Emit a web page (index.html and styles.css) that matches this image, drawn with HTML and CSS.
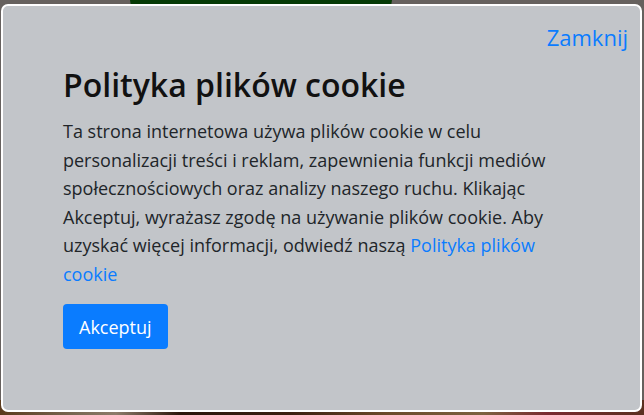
FILE: index.html
```html
<!DOCTYPE html>
<html lang="pl">
<head>
    <meta charset="UTF-8">
    <meta name="viewport" content="width=device-width, initial-scale=1.0">
    <title>Polityka plików cookie</title>
    <link rel="stylesheet" href="styles.css">
</head>
<body>
    <!-- Tło strony pod oknem -->
    <div class="page-bg">
        <div class="bg-logo"></div>
    </div>

    <!-- Okno cookie -->
    <div class="cookie-modal">
        <div class="modal-top">
            <a href="javascript:void(0)" class="close-link">Zamknij</a>
        </div>
        <div class="modal-body">
            <h2>Polityka plików cookie</h2>
            <p>Ta strona internetowa używa plików cookie w celu personalizacji treści i reklam, zapewnienia funkcji mediów społecznościowych oraz analizy naszego ruchu. Klikając Akceptuj, wyrażasz zgodę na używanie plików cookie. Aby uzyskać więcej informacji, odwiedź naszą <a href="javascript:void(0)">Polityka plików cookie</a></p>
            <button class="accept-btn">Akceptuj</button>
        </div>
    </div>
</body>
</html>
```

FILE: styles.css
```css
html, body {
    margin: 0;
    height: 100%;
}

body {
    font-family: "Open Sans", Arial, sans-serif;
    color: #212529;
    background: #66615e;
    overflow: hidden;
    position: relative;
}

/* Tło pod oknem */
.page-bg {
    position: absolute;
    inset: 0;
    background: linear-gradient(to bottom, #66615e 0, #66615e 400px, transparent 400px),
        linear-gradient(to right, #5a3a1c 0%, #7a6a55 12%, #8c7b6a 18%, #2a160c 28%, #3a1f10 45%, #6b4a2a 60%, #7c6240 75%, #7a2a30 85%, #5a3020 100%);
}

.bg-logo {
    position: absolute;
    top: -40px;
    left: 130px;
    width: 262px;
    height: 80px;
    border-radius: 50%;
    background: #053a05;
}

/* Okno cookie */
.cookie-modal {
    position: relative;
    margin: 4px 2px 0 1px;
    height: 408px;
    background: #c2c5c9;
    border: 2px solid #fff;
    border-radius: 7px;
    box-sizing: border-box;
}

.modal-top {
    display: flex;
    justify-content: flex-end;
    padding: 16px 12px 0 0;
}

.close-link {
    font-size: 22px;
    line-height: 30px;
    color: #0a7cff;
    text-decoration: none;
}

.modal-body {
    padding: 0 60px;
}

h2 {
    font-size: 32px;
    font-weight: 600;
    line-height: 40px;
    margin: 13px 0 12px 0;
    color: #111;
}

p {
    font-size: 18px;
    line-height: 28.5px;
    margin: 0 0 16px 0;
}

p a {
    color: #0a7cff;
    text-decoration: none;
}

.accept-btn {
    font-family: inherit;
    font-size: 18px;
    color: #fff;
    background: #0a7cff;
    border: none;
    border-radius: 4px;
    padding: 0 16px;
    height: 45px;
    cursor: pointer;
}
```
